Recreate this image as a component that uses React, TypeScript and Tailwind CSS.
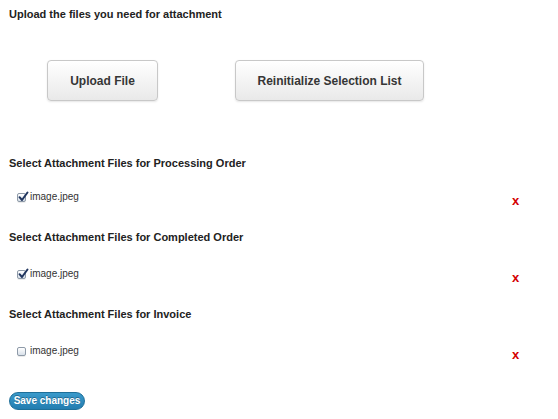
import React from "react";

type Attachment = {
  title: string;
  file: string;
  checked: boolean;
};

const sections: Attachment[] = [
  { title: "Select Attachment Files for Processing Order", file: "image.jpeg", checked: true },
  { title: "Select Attachment Files for Completed Order", file: "image.jpeg", checked: true },
  { title: "Select Attachment Files for Invoice", file: "image.jpeg", checked: false },
];

function MacCheckbox({ checked }: { checked: boolean }) {
  return (
    <span className="relative inline-block w-[9px] h-[9px] rounded-[2px] border border-[#8e9aa8] bg-gradient-to-b from-[#ffffff] to-[#d9e1ea] shadow-[0_1px_0_rgba(0,0,0,0.08)]">
      {checked && (
        <svg
          viewBox="0 0 12 12"
          className="absolute left-[-1px] top-[-3px] w-[12px] h-[12px]"
        >
          <path
            d="M2.5 6.2 L5 9 L10.5 1.5"
            fill="none"
            stroke="#20355e"
            strokeWidth="2"
            strokeLinecap="round"
            strokeLinejoin="round"
          />
        </svg>
      )}
    </span>
  );
}

function GreyButton({ label, width }: { label: string; width: string }) {
  return (
    <button
      className={`${width} h-[41px] rounded-[4px] border border-[#c8c8c8] bg-gradient-to-b from-[#ffffff] to-[#e9e9e9] shadow-[0_1px_2px_rgba(0,0,0,0.1)] text-[12px] font-bold text-[#363636]`}
    >
      {label}
    </button>
  );
}

export default function App() {
  return (
    <div className="w-[558px] h-[419px] bg-white pl-[9px] overflow-hidden font-['Liberation_Sans',Arial,sans-serif]">
      {/* Upload header */}
      <h2 className="mt-[7px] h-[14px] leading-[14px] text-[11px] font-bold text-[#222]">
        Upload the files you need for attachment
      </h2>

      {/* Buttons */}
      <div className="mt-[39px] ml-[38px] flex gap-[77px]">
        <GreyButton label="Upload File" width="w-[111px]" />
        <GreyButton label="Reinitialize Selection List" width="w-[189px]" />
      </div>

      {/* Attachment sections */}
      <div className="mt-[55px]">
        {sections.map((s, i) => (
          <div key={i} className={i === 0 ? "" : "mt-[22px]"}>
            <h3 className="h-[14px] leading-[14px] text-[11px] font-bold text-[#222]">
              {s.title}
            </h3>
            <div className={`${i === 0 ? "mt-[20px]" : "mt-[23px]"} flex items-start`}>
              <label className="w-[503px] h-[14px] pl-[8px] flex items-center gap-[4px] text-[10px] text-[#333] leading-[14px]">
                <MacCheckbox checked={s.checked} />
                <span>{s.file}</span>
              </label>
              <span className="mt-[4px] h-[14px] leading-[14px] text-[13px] font-bold text-[#d40000]">
                x
              </span>
            </div>
          </div>
        ))}
      </div>

      {/* Save */}
      <button className="mt-[30px] w-[76px] h-[18px] rounded-full border border-[#1e6f99] bg-gradient-to-b from-[#3a9acb] to-[#237db0] text-[10px] font-bold text-white leading-[16px] [text-shadow:0_-1px_0_rgba(0,0,0,0.3)]">
        Save changes
      </button>
    </div>
  );
}
